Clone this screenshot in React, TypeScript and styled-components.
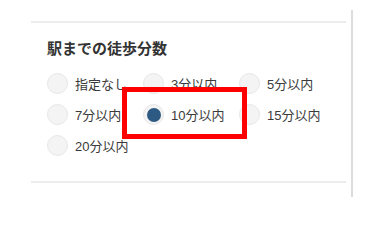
import React from 'react';
import styled, { createGlobalStyle } from 'styled-components';

const GlobalStyle = createGlobalStyle`
  html, body {
    margin: 0;
    padding: 0;
    background: #fff;
  }

  body {
    font-family: "Liberation Sans", "Noto Sans CJK JP", sans-serif;
    color: #333;
  }
`;

const Sidebar = styled.div`
  box-sizing: border-box;
  width: 353px;
  height: 187px;
  margin-top: 10px;
  padding: 11px 5px 0 31px;
  border-right: 2px solid #dcdcdc;
`;

const Section = styled.section`
  position: relative;
  box-sizing: border-box;
  height: 162px;
  padding: 15px 0 0 16px;
  border-top: 2px solid #ececec;
  border-bottom: 2px solid #ececec;
`;

const Title = styled.h3`
  margin: 0 0 13px;
  font-size: 15px;
  line-height: 22px;
  font-weight: bold;
  color: #333;
`;

const Options = styled.div`
  display: grid;
  grid-template-columns: repeat(3, 96px);
  row-gap: 10px;
`;

const Option = styled.label`
  display: flex;
  align-items: center;
  gap: 7px;
  height: 21px;
  font-size: 13px;
  color: #3a3a3a;
  white-space: nowrap;
`;

const Radio = styled.span<{ $checked?: boolean }>`
  box-sizing: border-box;
  flex: none;
  display: flex;
  align-items: center;
  justify-content: center;
  width: 21px;
  height: 21px;
  border-radius: 50%;
  background: #f4f4f4;
  border: 1px solid #e6e6e6;

  &::after {
    content: '';
    display: ${p => (p.$checked ? 'block' : 'none')};
    width: 14px;
    height: 14px;
    border-radius: 50%;
    background: #2d5a82;
  }
`;

const Highlight = styled.div`
  position: absolute;
  left: 91px;
  top: 64px;
  width: 125px;
  height: 52px;
  box-sizing: border-box;
  border: 5px solid #ff0000;
  pointer-events: none;
`;

const options = ['指定なし', '3分以内', '5分以内', '7分以内', '10分以内', '15分以内', '20分以内'];

const App = () => {
  const selected = '10分以内';

  return (
    <>
      <GlobalStyle />
      <Sidebar>
        <Section>
          <Title>駅までの徒歩分数</Title>
          <Options>
            {options.map(o => (
              <Option key={o}>
                <Radio $checked={o === selected} />
                {o}
              </Option>
            ))}
          </Options>
          <Highlight />
        </Section>
      </Sidebar>
    </>
  );
};

export default App;
